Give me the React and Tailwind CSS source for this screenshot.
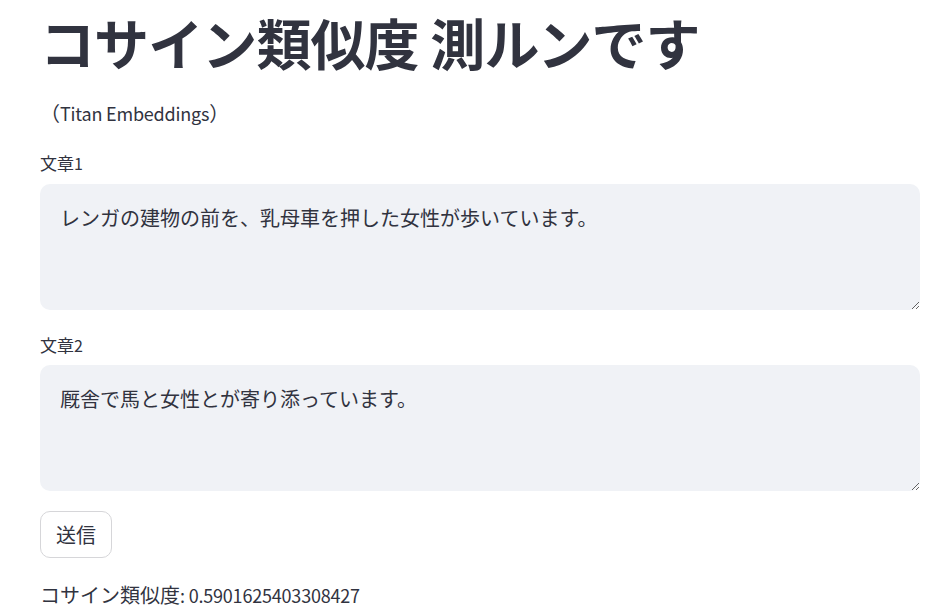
export default function App() {
  const font = { fontFamily: '"Noto Sans CJK JP", "Noto Sans", sans-serif' };
  return (
    <div className="w-[952px] h-[612px] bg-white text-[#31333F] overflow-hidden" style={font}>
      <div className="pl-[40px] w-[920px] flex flex-col">
        <h1 className="mt-[8px] h-[66px] leading-[66px] text-[55px] font-bold tracking-[-0.9px] whitespace-nowrap">
          コサイン類似度 測ルンです
        </h1>
        <p className="mt-[23px] h-[32px] leading-[32px] text-[20px] whitespace-nowrap">
          （<span className="text-[18px] tracking-[-0.2px]">Titan Embeddings</span>）
        </p>
        <label className="mt-[20px] h-[28px] leading-[28px] text-[17px]">
          文章<span className="text-[16px]">1</span>
        </label>
        <textarea
          readOnly
          defaultValue="レンガの建物の前を、乳母車を押した女性が歩いています。"
          className="mt-[7px] w-[880px] h-[126px] rounded-[10px] bg-[#F0F2F6] px-[20px] pt-[18px] text-[20px] leading-[32px] resize-y outline-none"
        />
        <label className="mt-[21px] h-[28px] leading-[28px] text-[17px]">
          文章<span className="text-[16px]">2</span>
        </label>
        <textarea
          readOnly
          defaultValue="厩舎で馬と女性とが寄り添っています。"
          className="mt-[6px] w-[880px] h-[126px] rounded-[10px] bg-[#F0F2F6] px-[20px] pt-[18px] text-[20px] leading-[32px] resize-y outline-none"
        />
        <div className="mt-[20px]">
          <button className="h-[47px] w-[72px] rounded-[10px] border border-[#D6D6D9] bg-white text-[20px] leading-none">
            送信
          </button>
        </div>
        <p className="mt-[21px] h-[32px] leading-[32px] text-[20px] whitespace-nowrap">
          コサイン類似度<span className="text-[18px] tracking-[-0.2px]">: 0.5901625403308427</span>
        </p>
      </div>
    </div>
  );
}
